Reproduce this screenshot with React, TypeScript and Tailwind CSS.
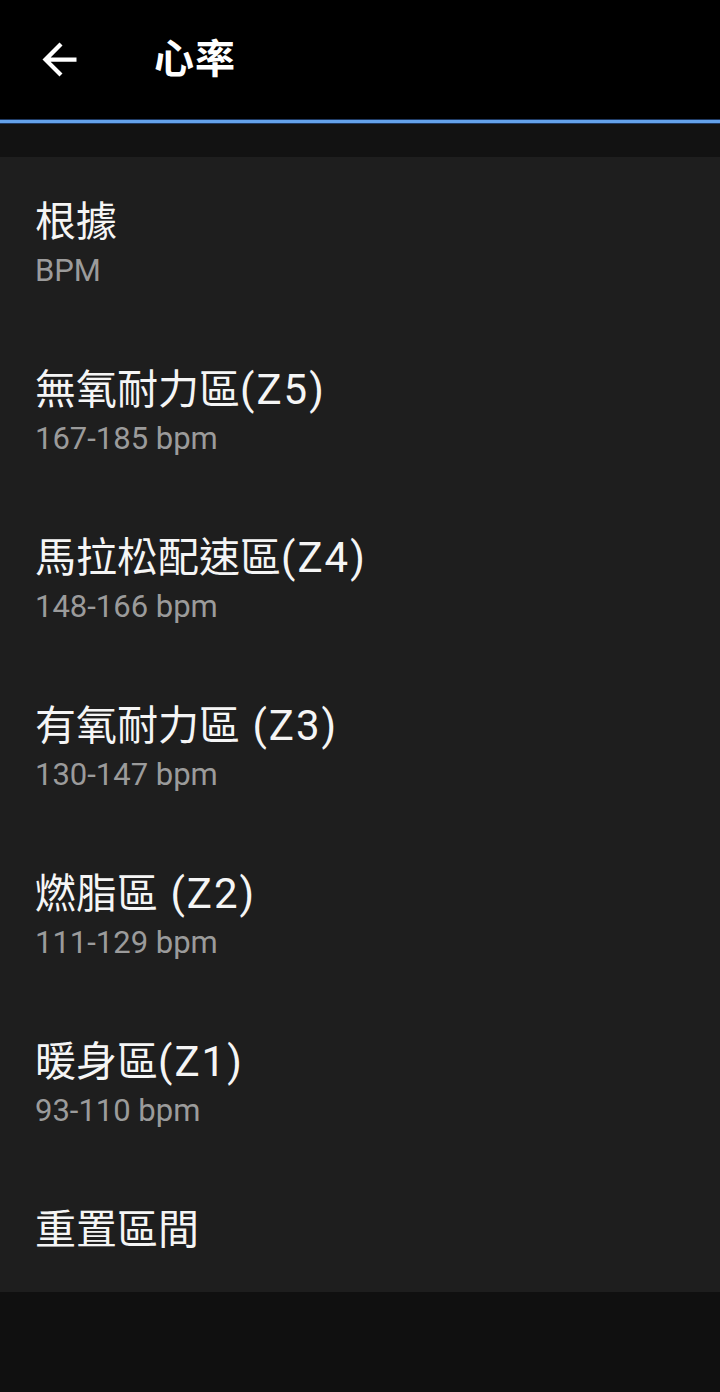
import React from "react";

type Zone = {
  title: string;
  code?: string;
  sub?: string;
};

const items: Zone[] = [
  { title: "根據", sub: "BPM" },
  { title: "無氧耐力區", code: "(Z5)", sub: "167-185 bpm" },
  { title: "馬拉松配速區", code: "(Z4)", sub: "148-166 bpm" },
  { title: "有氧耐力區", code: " (Z3)", sub: "130-147 bpm" },
  { title: "燃脂區", code: " (Z2)", sub: "111-129 bpm" },
  { title: "暖身區", code: "(Z1)", sub: "93-110 bpm" },
  { title: "重置區間" },
];

const font = {
  fontFamily: 'Roboto, "Noto Sans CJK TC", sans-serif',
};

const BackArrow = () => (
  <svg width="51" height="51" viewBox="0 0 24 24" fill="currentColor">
    <path d="M20 11H7.83l5.59-5.59L12 4l-8 8 8 8 1.41-1.41L7.83 13H20v-2z" />
  </svg>
);

export default function App() {
  return (
    <div
      className="min-h-[1392px] w-[720px] bg-[#101010] text-white"
      style={font}
    >
      {/* header */}
      <header className="flex h-[119px] items-center bg-black">
        <button className="ml-[34px] flex items-center text-white" aria-label="back">
          <BackArrow />
        </button>
        <h1 className="ml-[69px] text-[40px] leading-none font-bold tracking-[1px]">
          心率
        </h1>
      </header>
      <div className="h-[5px] border-y border-[#1f3a63] bg-[#64a2ea]" />
      <div className="h-[33px] bg-[#121212]" />

      {/* list */}
      <ul className="bg-[#1e1e1e] pt-[3px]">
        {items.map((item, i) => (
          <li key={i} className="px-[35px] py-[36px]">
            <div className="text-[41px] leading-[52px] text-[#f5f5f5]">
              {item.title}
              {item.code && (
                <span className="whitespace-pre text-[42px] tracking-[2px]">
                  {item.code}
                </span>
              )}
            </div>
            {item.sub && (
              <div className="mt-[2px] text-[31px] leading-[42px] text-[#9b9b9b]">
                {item.sub}
              </div>
            )}
          </li>
        ))}
      </ul>
    </div>
  );
}
